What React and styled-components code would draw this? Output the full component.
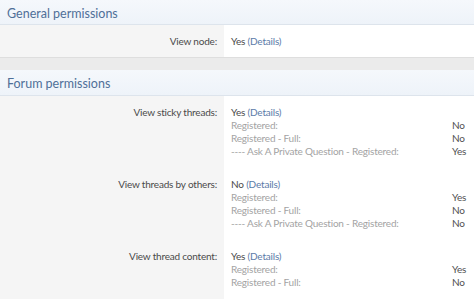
import React from "react";
import styled, { createGlobalStyle } from "styled-components";

const Global = createGlobalStyle`
  html, body { margin: 0; padding: 0; background: #fff; }
  body { font-family: "Lato", "Noto Sans", "Liberation Sans", sans-serif; }
`;

const Page = styled.div`
  display: flex;
  flex-direction: column;
  width: 474px;
`;

const Header = styled.h3`
  margin: 0;
  height: ${(p) => p.$h}px;
  box-sizing: border-box;
  display: flex;
  align-items: center;
  padding: 2px 7px 0;
  font-size: 12.5px;
  font-weight: 400;
  color: #4f6f98;
  background: linear-gradient(to bottom, #f5f8fc, #eef3f9);
  border-bottom: 1px solid #dde4ec;
`;

const Spacer = styled.div`
  height: 12px;
  background: #ebebeb;
  border-top: 1px solid #dedede;
`;

const Row = styled.div`
  display: grid;
  grid-template-columns: 224px 1fr;
`;

const Cell = styled.div`
  padding: ${(p) => p.$pad};
  font-size: 10px;
  letter-spacing: -0.2px;
  line-height: 13px;
  color: #4a4a4a;
`;

const Label = styled(Cell)`
  background: #f5f5f5;
  text-align: right;
  padding-right: 7px;
`;

const Value = styled(Cell)`
  background: #fff;
  padding-left: 7px;
`;

const Details = styled.span`
  color: #5b7ba8;
`;

const SubList = styled.div`
  display: grid;
  grid-template-columns: 221px 1fr;
`;

const SubName = styled.div`
  color: #a3a3a3;
`;

const SubVal = styled.div`
  color: #505050;
`;

const forum = [
  {
    label: "View sticky threads:",
    value: "Yes",
    subs: [
      ["Registered:", "No"],
      ["Registered - Full:", "No"],
      ["---- Ask A Private Question - Registered:", "Yes"],
    ],
  },
  {
    label: "View threads by others:",
    value: "No",
    subs: [
      ["Registered:", "Yes"],
      ["Registered - Full:", "No"],
      ["---- Ask A Private Question - Registered:", "No"],
    ],
  },
  {
    label: "View thread content:",
    value: "Yes",
    subs: [
      ["Registered:", "Yes"],
      ["Registered - Full:", "No"],
    ],
  },
];

function Perm({ label, value, subs, pad }) {
  return (
    <Row>
      <Label $pad={pad}>{label}</Label>
      <Value $pad={pad}>
        <div>
          {value} <Details>(Details)</Details>
        </div>
        {subs && (
          <SubList>
            {subs.map(([n, v], i) => (
              <React.Fragment key={i}>
                <SubName>{n}</SubName>
                <SubVal>{v}</SubVal>
              </React.Fragment>
            ))}
          </SubList>
        )}
      </Value>
    </Row>
  );
}

export default function App() {
  return (
    <>
      <Global />
      <Page>
        <Header $h={25}>General permissions</Header>
        <Perm label="View node:" value="Yes" pad="10px 0 9px" />
        <Spacer />
        <Header $h={26}>Forum permissions</Header>
        {forum.map((f, i) => (
          <Perm key={i} {...f} pad="10px 0 10px" />
        ))}
      </Page>
    </>
  );
}
